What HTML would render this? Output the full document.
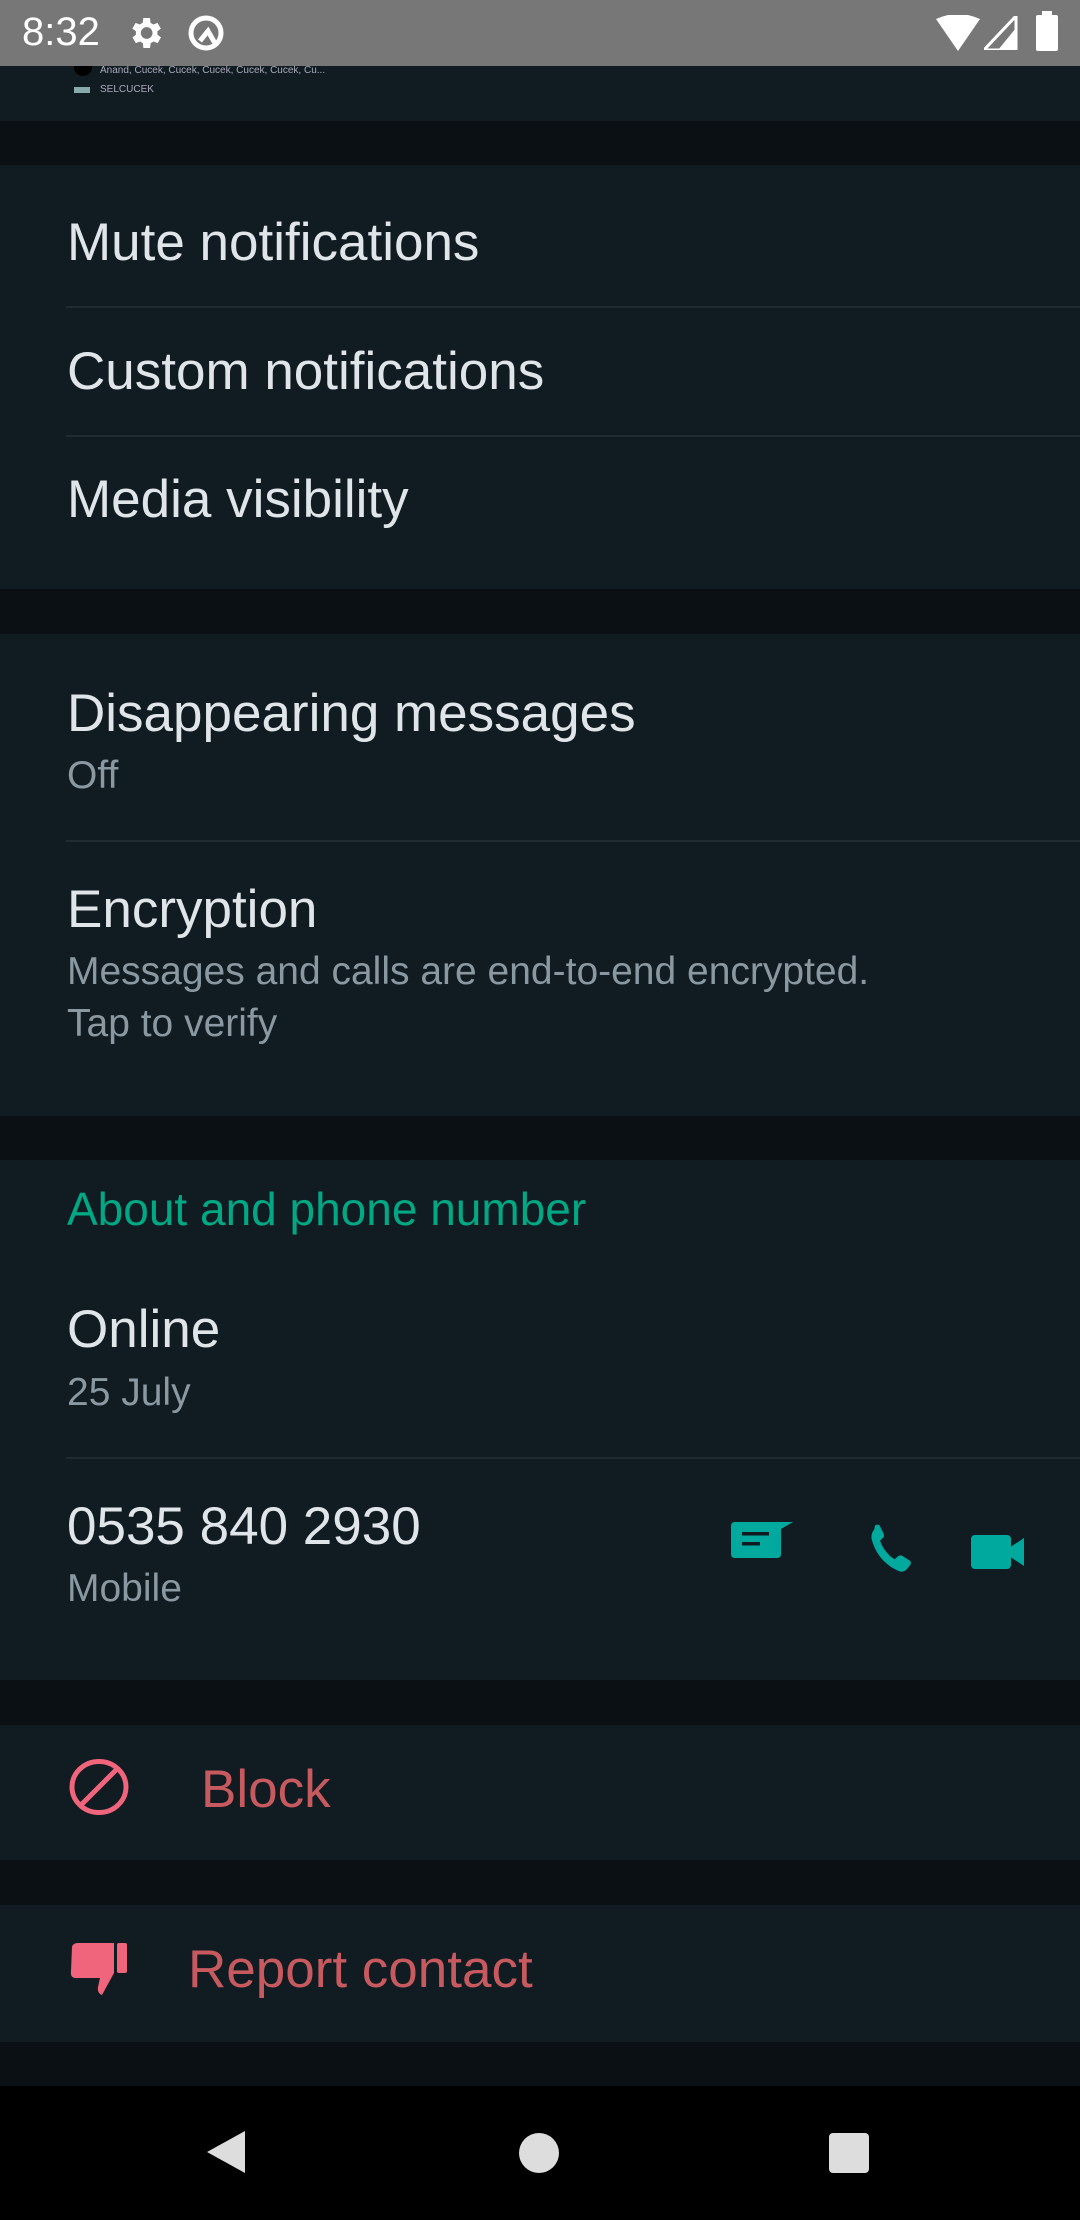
<!DOCTYPE html>
<html><head><meta charset="utf-8"><style>
*{margin:0;padding:0;box-sizing:border-box}
body{width:1080px;height:2220px;background:#0b1014;position:relative;overflow:hidden;font-family:"Liberation Sans",sans-serif}
.s{position:absolute;left:0;width:1080px;background:#111b22}
.t{position:absolute;left:67px;white-space:nowrap;line-height:1}
.p{font-size:53px;color:#dfe5e8}
.q{font-size:39px;color:#8a98a1}
.d{position:absolute;left:66px;right:0;height:2px;background:#1f2a31}
</style></head><body>
<div style="position:absolute;left:0;top:0;width:1080px;height:66px;background:#777">
<div style="position:absolute;left:22px;top:12px;font-size:40px;color:#fff;line-height:1">8:32</div>
<svg style="position:absolute;left:125px;top:13px" width="40" height="40" viewBox="0 0 24 24"><path fill="#fff" d="M19.4 13a7.5 7.5 0 000-2l2.1-1.6-2-3.5-2.5 1a7.3 7.3 0 00-1.7-1L15 3h-4l-.4 2.9a7.3 7.3 0 00-1.7 1l-2.5-1-2 3.5L6.6 11a7.5 7.5 0 000 2l-2.1 1.6 2 3.5 2.5-1a7.3 7.3 0 001.7 1L11 21h4l.4-2.9a7.3 7.3 0 001.7-1l2.5 1 2-3.5zM13 15.5a3.5 3.5 0 110-7 3.5 3.5 0 010 7z"/></svg>
<svg style="position:absolute;left:186px;top:13px" width="40" height="40" viewBox="0 0 40 40"><circle cx="20" cy="20" r="15" fill="none" stroke="#fff" stroke-width="5"/><path d="M14 28l8-10 8 14" fill="none" stroke="#fff" stroke-width="5"/></svg>
<svg style="position:absolute;left:936px;top:15px" width="44" height="36" viewBox="0 0 44 36"><path d="M0 4Q22-6 44 4L22 36z" fill="#fff"/></svg>
<svg style="position:absolute;left:984px;top:16px" width="34" height="34" viewBox="0 0 34 34"><path d="M32 0V34H0z" fill="none" stroke="#fff" stroke-width="3"/><path d="M32 12V34H14z" fill="#fff"/></svg>
<div style="position:absolute;left:1036px;top:15px;width:22px;height:36px;background:#fff;border-radius:2px"></div>
<div style="position:absolute;left:1042px;top:11px;width:10px;height:5px;background:#fff"></div>
</div>
<div class="s" style="top:66px;height:55px">
<div style="position:absolute;left:74px;top:0;width:18px;height:10px;background:#000;border-radius:0 0 9px 9px"></div>
<div style="position:absolute;left:100px;top:0;font-size:10px;color:#aab;line-height:1">Anand, Cucek, Cucek, Cucek, Cucek, Cucek, Cu...</div>
<div style="position:absolute;left:74px;top:21px;width:16px;height:6px;background:#8aa"></div>
<div style="position:absolute;left:100px;top:19px;font-size:10px;color:#aab;line-height:1">SELCUCEK</div>
</div>
<div class="s" style="top:165px;height:424px">
<div class="t p" style="top:51px">Mute notifications</div>
<div class="d" style="top:141px"></div>
<div class="t p" style="top:180px">Custom notifications</div>
<div class="d" style="top:270px"></div>
<div class="t p" style="top:308px">Media visibility</div>
</div>
<div class="s" style="top:634px;height:482px">
<div class="t p" style="top:53px">Disappearing messages</div>
<div class="t q" style="top:122px">Off</div>
<div class="d" style="top:206px"></div>
<div class="t p" style="top:249px">Encryption</div>
<div class="t q" style="top:318px">Messages and calls are end-to-end encrypted.</div>
<div class="t q" style="top:370px">Tap to verify</div>
</div>
<div class="s" style="top:1160px;height:520px">
<div class="t" style="top:26px;font-size:46px;color:#00a884">About and phone number</div>
<div class="t p" style="top:143px">Online</div>
<div class="t q" style="top:213px">25 July</div>
<div class="d" style="top:297px"></div>
<div class="t p" style="top:340px">0535 840 2930</div>
<div class="t q" style="top:409px">Mobile</div>
<svg style="position:absolute;left:731px;top:361px" width="63" height="38" viewBox="0 0 63 38"><path d="M4 1H62L50 8V33Q50 37 46 37H4Q0 37 0 33V5Q0 1 4 1z" fill="#00a99d"/><rect x="11" y="11" width="27" height="3.5" fill="#111b22"/><rect x="11" y="21" width="18" height="3.5" fill="#111b22"/></svg>
<svg style="position:absolute;left:869px;top:364px" width="44" height="50" viewBox="4 3 16 18" preserveAspectRatio="none"><path fill="#00a99d" d="M6.2 3.6c.6-.6 1.4-.5 1.8.2l1.3 2.6c.3.6.2 1.2-.2 1.6L8 9c.9 2.6 2.9 5.3 5.3 6.7l1.3-1.1c.5-.4 1.1-.4 1.6-.1l2.5 1.6c.6.4.7 1.2.2 1.8l-1.3 1.5c-.8.9-2.1 1-3.1.4C9.7 17.7 6.3 13.6 5 8.6c-.3-1.3 0-2.6.9-3.6z"/></svg>
<svg style="position:absolute;left:971px;top:375px" width="54" height="34" viewBox="0 0 54 34"><rect x="0" y="0" width="40" height="34" rx="4" fill="#00a99d"/><path d="M38 13L53 3V31L38 21z" fill="#00a99d"/></svg>
</div>
<div class="s" style="top:1725px;height:135px">
<svg style="position:absolute;left:68px;top:33px" width="64" height="58" viewBox="0 0 64 58"><ellipse cx="31" cy="29" rx="27" ry="25.5" fill="none" stroke="#f0657c" stroke-width="5"/><path d="M13 47L49 11" stroke="#f0657c" stroke-width="5"/></svg>
<div class="t" style="left:201px;top:38px;font-size:53px;color:#c75a5f">Block</div>
</div>
<div class="s" style="top:1905px;height:137px">
<svg style="position:absolute;left:70px;top:38px" width="58" height="52" viewBox="0 0 58 52"><path d="M8 0H44V30L32 52Q27 50 28 44L30 35H6Q0 35 1 28L2 4Q3 0 8 0z" fill="#f0657c"/><rect x="47" y="0" width="10" height="30" rx="2" fill="#f0657c"/></svg>
<div class="t" style="left:188px;top:38px;font-size:53px;color:#c75a5f">Report contact</div>
</div>
<div style="position:absolute;left:0;top:2086px;width:1080px;height:134px;background:#000">
<svg style="position:absolute;left:205px;top:44px" width="42" height="44" viewBox="0 0 42 44"><path d="M40 1V43L2 22z" fill="#ddd"/></svg>
<div style="position:absolute;left:519px;top:47px;width:40px;height:40px;border-radius:50%;background:#ddd"></div>
<div style="position:absolute;left:829px;top:47px;width:40px;height:40px;border-radius:4px;background:#ddd"></div>
</div>
</body></html>
